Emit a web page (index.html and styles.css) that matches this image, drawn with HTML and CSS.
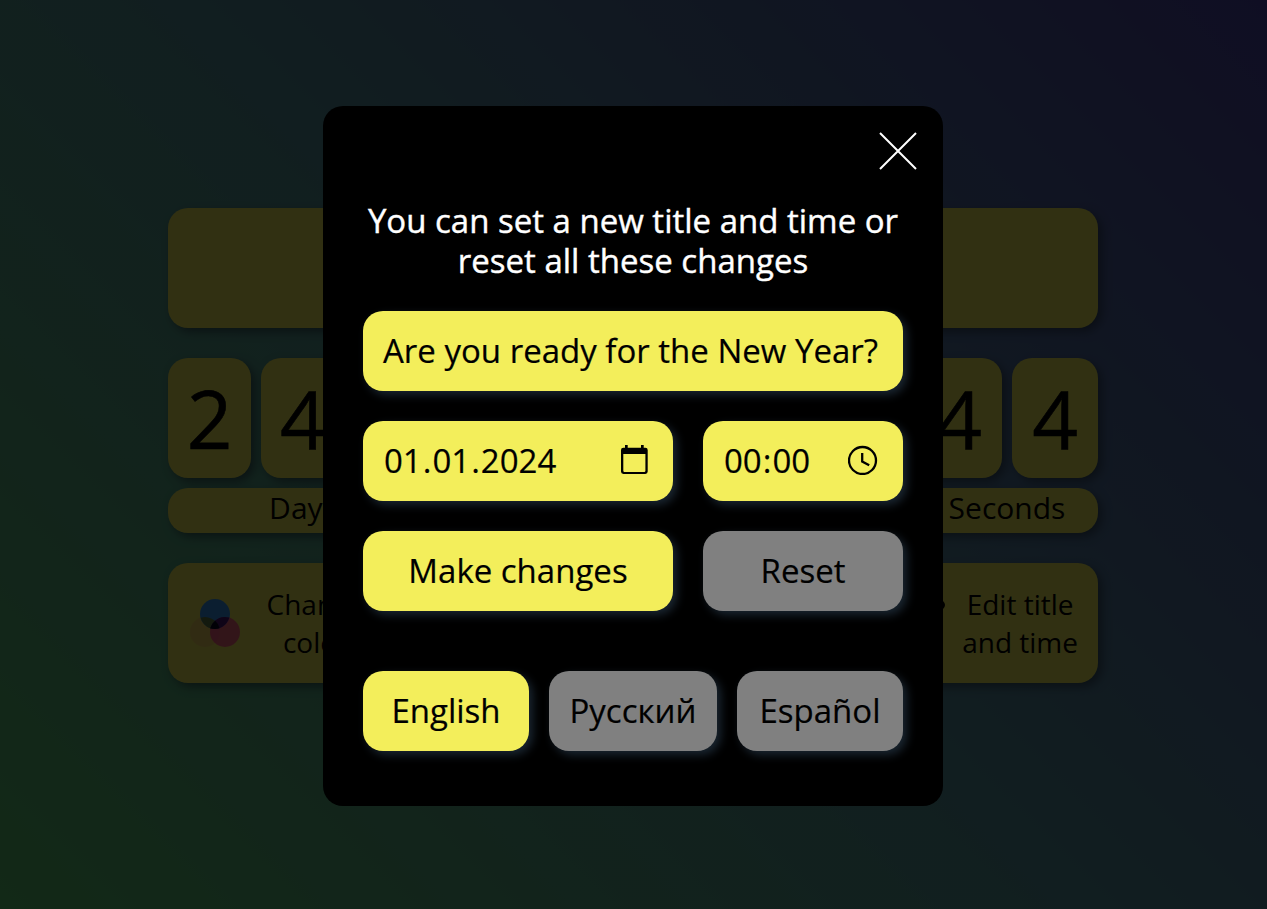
FILE: index.html
```
<!DOCTYPE html>
<html lang="en">
<head>
<meta charset="utf-8">
<title>New Year countdown</title>
<link rel="stylesheet" href="styles.css">
</head>
<body>
<main class="page">
  <div class="board">
    <div class="tile heading"></div>
    <div class="timer">
      <div class="unit days">
        <div class="digits"><span class="tile digit">2</span><span class="tile digit">4</span><span class="tile digit"></span></div>
        <div class="tile label">Days</div>
      </div>
      <div class="unit seconds">
        <div class="digits"><span class="tile digit">4</span><span class="tile digit">4</span></div>
        <div class="tile label">Seconds</div>
      </div>
    </div>
    <div class="actions">
      <div class="tile action action-color">
        <svg class="circles" viewBox="0 0 50 48" width="50" height="48"><circle cx="15" cy="33" r="15" fill="#ff5a7a" fill-opacity=".15"/><circle cx="25" cy="15" r="15" fill="#3898f0"/><circle cx="35" cy="33" r="15" fill="#ff1496" fill-opacity=".6"/><path d="M10.700 18.700A15 15 0 0 1 29.100 28.200 15 15 0 0 1 20.200 29.200 15 15 0 0 1 10.700 18.700Z" fill="#68782c" fill-opacity=".85"/><path d="M20.200 30.500A15 15 0 0 1 34.200 18 15 15 0 0 1 39.300 18.600 15 15 0 0 1 20.200 29.200Z" fill="#28085a" fill-opacity=".75"/><path d="M20.200 29.200A15 15 0 0 1 25.200 21.700 15 15 0 0 1 29.600 29.300 15 15 0 0 1 20.200 29.200Z" fill="#050720"/></svg>
        <span class="caption">Change<br>color</span>
      </div>
      <div class="tile action action-edit">
        <svg class="pen" viewBox="0 0 50 50" width="50" height="50"><path d="M3 47l3-13L34 3q4-4 8-2l6 2q4 4 0 8L16 44Z"/></svg>
        <span class="caption">Edit title<br>and time</span>
      </div>
    </div>
  </div>
</main>
<div class="overlay">
  <section class="modal">
    <button class="close" aria-label="Close"><svg viewBox="0 0 40 40" width="40" height="40"><path d="M2 2L38 38M38 2L2 38"/></svg></button>
    <h1 class="title">You can set a new title and time or reset all these changes</h1>
    <div class="field name">Are you ready for the New Year?</div>
    <div class="row">
      <div class="field date">
        <span class="value"><span class="part">01</span>.<span class="part">01</span>.<span class="part">2024</span></span>
        <svg viewBox="0 0 27 29" width="27" height="29"><path fill-rule="evenodd" d="M4 0h2.700v2.700H20V0h2.700v2.700H24.300a2.400 2.400 0 0 1 2.400 2.400V26.600a2.400 2.400 0 0 1-2.400 2.400H2.400A2.400 2.400 0 0 1 0 26.600V5.100A2.400 2.400 0 0 1 2.400 2.700H4ZM2.300 8.900V26.100a.8.8 0 0 0 .8.8H23.600a.8.8 0 0 0 .8-.8V8.900Z"/></svg>
      </div>
      <div class="field time">
        <span class="value"><span class="part">00</span>:<span class="part">00</span></span>
        <svg class="clock" viewBox="0 0 30 30" width="30" height="30"><circle cx="14.500" cy="15.500" r="13.500"/><path d="M14.200 8V16.500L21.200 20.200"/></svg>
      </div>
    </div>
    <div class="row">
      <button class="field apply">Make changes</button>
      <button class="field reset muted">Reset</button>
    </div>
    <div class="languages">
      <button class="field language">English</button>
      <button class="field language muted">Русский</button>
      <button class="field language muted">Español</button>
    </div>
  </section>
</div>
</body>
</html>
```
FILE: styles.css
```
* { box-sizing: border-box; }
body { margin: 0; height: 100vh; overflow: hidden; font-family: "Open Sans", sans-serif; color: #000; }
button { font: inherit; color: inherit; border: 0; padding: 0; }
.page { height: 100vh; padding: 208px 169px 0 168px; background: linear-gradient(45deg, #5acb72 0%, #58969f 50%, #4e48ae 100%); }
.board { display: flex; flex-direction: column; gap: 30px; }
.tile { background: #f3ee5b; border-radius: 20px; box-shadow: 4px 4px 10px rgba(35, 50, 65, .6); }
.heading { height: 120px; }
.timer { display: flex; justify-content: space-between; }
.unit { display: flex; flex-direction: column; gap: 10px; }
.days { width: 270px; }
.seconds { width: 182px; }
.digits { display: flex; gap: 10px; }
.digit { flex: 1; height: 120px; font-size: 80px; line-height: 120px; text-align: center; -webkit-text-stroke: .6px #000; }
.label { height: 45px; font-size: 30px; line-height: 39px; text-align: center; }
.actions { display: flex; justify-content: space-between; }
.action { height: 120px; display: flex; align-items: center; justify-content: space-between; padding: 0 20px 0 22px; font-size: 28px; line-height: 38px; text-align: center; }
.action-color { width: 217px; }
.action-edit { width: 225px; }
.overlay { position: absolute; inset: 0; display: flex; justify-content: center; padding-top: 106px; background: rgba(0, 0, 0, .8); }
.modal { width: 620px; height: 700px; margin-right: 1px; padding: 25px 40px 0; background: #000; border-radius: 20px; display: flex; flex-direction: column; font-size: 33px; line-height: 40px; }
.close { width: 40px; height: 40px; align-self: flex-end; margin-right: -15px; background: none; }
.close svg { display: block; fill: none; stroke: #fff; stroke-width: 2; }
.title { margin: 30px -5px 0; color: #fff; font-size: 33px; line-height: 40px; font-weight: 400; text-align: center; -webkit-text-stroke: .4px #fff; }
.field { height: 80px; border-radius: 20px; background: #f3ee5b; box-shadow: 4px 4px 10px #1a2631; display: flex; align-items: center; justify-content: center; -webkit-text-stroke: .2px #000; }
.name { margin-top: 30px; padding-left: 20px; justify-content: flex-start; white-space: nowrap; }
.row { display: flex; gap: 30px; margin-top: 30px; }
.date, .time { justify-content: space-between; padding: 0 25px 0 20px; }
.part { padding: 0 1px; }
.date, .apply { width: 310px; }
.time, .reset { width: 200px; }
.date svg { display: block; margin: 0 -.4px 3px 0; }
.clock { display: block; margin-bottom: 2px; fill: none; stroke: #000; stroke-width: 2.300; }
.muted { background: #808080; }
.languages { display: grid; grid-template-columns: 166px 168px 166px; gap: 20px; margin-top: 60px; }
```
